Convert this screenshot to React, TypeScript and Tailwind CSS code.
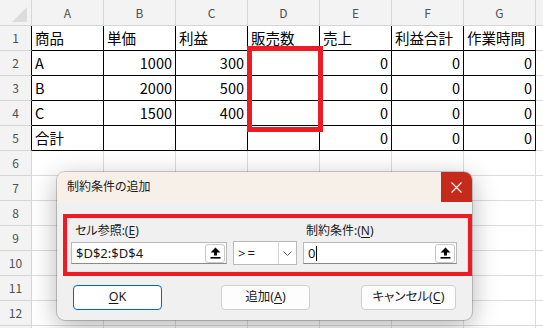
import React from "react";

const COLS = ["A", "B", "C", "D", "E", "F", "G", "H"];
type V = string | number;
const DATA: V[][] = [
  ["商品", "単価", "利益", "販売数", "売上", "利益合計", "作業時間"],
  ["A", 1000, 300, "", 0, 0, 0],
  ["B", 2000, 500, "", 0, 0, 0],
  ["C", 1500, 400, "", 0, 0, 0],
  ["合計", "", "", "", 0, 0, 0],
];

function UpBtn() {
  return (
    <div className="w-[20px] h-[19px] bg-white border border-[#c9c9c9] rounded-[3px] flex items-center justify-center">
      <svg width="11" height="12" viewBox="0 0 11 12">
        <path d="M5.5 0.5 L10.5 5.5 H7 V8.5 H4 V5.5 H0.5 Z" fill="#000" />
        <rect x="0.5" y="10" width="10" height="1.6" fill="#000" />
      </svg>
    </div>
  );
}

function Sheet() {
  const rows = 13;
  const cells: React.ReactNode[] = [];
  cells.push(
    <div key="corner" className="h-[26px] bg-[#f3f3f3] border-r border-b border-[#d6d6d6] relative">
      <svg width="32" height="26" className="absolute left-0 top-0">
        <polygon points="27,7 27,22 12,22" fill="#dcdcdc" />
      </svg>
    </div>
  );
  COLS.forEach((c, ci) => {
    cells.push(
      <div
        key={"h" + c}
        className="h-[26px] bg-[#f3f3f3] border-r border-b border-[#d6d6d6] flex items-center justify-center text-[12px] text-[#505050]"
      >
        {ci < 7 ? c : ""}
      </div>
    );
  });
  for (let r = 1; r <= rows; r++) {
    const inTable = r <= 5;
    cells.push(
      <div
        key={"r" + r}
        className={
          "h-[25px] bg-[#f3f3f3] border-r border-b border-b-[#d6d6d6] flex items-center justify-center text-[12px] text-[#505050] " +
          (inTable ? "border-r-black" : "border-r-[#d6d6d6]")
        }
      >
        {r < 13 ? r : ""}
      </div>
    );
    COLS.forEach((c, ci) => {
      const t = inTable && ci < 7;
      const v: V = t ? DATA[r - 1][ci] : "";
      const isNum = typeof v === "number";
      cells.push(
        <div
          key={c + r}
          className={
            "h-[25px] border-r border-b flex items-center overflow-hidden whitespace-nowrap text-[14.5px] text-black " +
            (t ? "border-black " : "border-[#dcdcdc] ") +
            (isNum ? "justify-end pr-[3px]" : "justify-start pl-[3px]")
          }
        >
          {v}
        </div>
      );
    });
  }
  return (
    <div className="grid grid-cols-[32px_repeat(8,72px)] font-['Noto_Sans_CJK_JP',sans-serif] leading-none">
      {cells}
    </div>
  );
}

function Dialog() {
  return (
    <div className="absolute left-[57px] top-[172px] w-[415px] h-[148px] rounded-[8px] overflow-hidden bg-[#f0f0f0] shadow-[0_0_0_1px_rgba(0,0,0,0.18),0_6px_26px_rgba(0,0,0,0.3)] font-['Noto_Sans','Noto_Sans_CJK_JP',sans-serif] [font-feature-settings:'palt'] text-[#1a1a1a]">
      <div className="flex h-[30px] bg-[#f7f0e9]">
        <div className="flex-1 flex items-center pl-[10px] text-[12px]">制約条件の追加</div>
        <div className="w-[31px] h-[30px] bg-[#c42b1c] flex items-center justify-center">
          <svg width="11" height="11" viewBox="0 0 11 11">
            <path d="M0.5 0.5 L10.5 10.5 M10.5 0.5 L0.5 10.5" stroke="#fff" strokeWidth="1.1" />
          </svg>
        </div>
      </div>
      <div className="pt-[12px] pl-[6px]">
        <div className="h-[62px] border-4 border-[#ed1c24] flex">
          <div className="flex-1 flex items-start pl-[3px] border border-[#e2e2e2]">
            <div className="w-[156px] pt-[3px] flex flex-col">
              <div className="h-[18px] flex items-center pl-[4px] text-[12px]">
                セル参照:(<span className="underline underline-offset-2">E</span>)
              </div>
              <div className="mt-[2px] h-[22px] bg-white border border-[#b9b9b9] border-b-[#8a8a8a] flex items-center pl-[4px] pr-[1px]">
                <span className="flex-1 text-[13px] leading-none">$D$2:$D$4</span>
                <UpBtn />
              </div>
            </div>
            <div className="ml-[6px] mt-[22px] w-[64px] h-[24px] bg-white border border-[#b9b9b9] flex items-center">
              <span className="flex-1 pl-[4px] text-[13px] tracking-[2px] leading-none">&gt;=</span>
              <div className="w-[18px] h-[22px] border-l border-[#d4d4d4] flex items-center justify-center">
                <svg width="9" height="5" viewBox="0 0 9 5">
                  <polyline points="0.5,0.5 4.5,4.5 8.5,0.5" fill="none" stroke="#606060" strokeWidth="1" />
                </svg>
              </div>
            </div>
            <div className="ml-[6px] w-[154px] pt-[3px] flex flex-col">
              <div className="h-[18px] flex items-center pl-[3px] text-[12px]">
                制約条件:(<span className="underline underline-offset-2">N</span>)
              </div>
              <div className="mt-[2px] h-[22px] bg-white border border-[#b9b9b9] border-b-[#8a8a8a] flex items-center pl-[4px] pr-[1px]">
                <span className="flex-1 flex items-center text-[13px] leading-none">
                  0<span className="inline-block w-px h-[15px] bg-black ml-[1px]" />
                </span>
                <UpBtn />
              </div>
            </div>
          </div>
        </div>
        <div className="mt-[9px] flex h-[25px] text-[12.5px]">
          <div className="ml-[10px] w-[89px] h-[25px] bg-white border border-[#0067c0] rounded-[4px] flex items-center justify-center">
            <span className="underline underline-offset-2">O</span>K
          </div>
          <div className="ml-[59px] w-[89px] h-[25px] bg-[#fdfdfd] border border-[#d0d0d0] rounded-[4px] flex items-center justify-center">
            追加(<span className="underline underline-offset-2">A</span>)
          </div>
          <div className="ml-[51px] w-[95px] h-[25px] bg-[#fdfdfd] border border-[#d0d0d0] rounded-[4px] flex items-center justify-center">
            キャンセル(<span className="underline underline-offset-2">C</span>)
          </div>
        </div>
      </div>
    </div>
  );
}

export default function App() {
  return (
    <div className="relative w-[543px] h-[328px] overflow-hidden bg-white">
      <Sheet />
      <div className="absolute left-[247px] top-[46px] w-[76px] h-[86px] border-[5px] border-[#ed1c24]" />
      <Dialog />
    </div>
  );
}
